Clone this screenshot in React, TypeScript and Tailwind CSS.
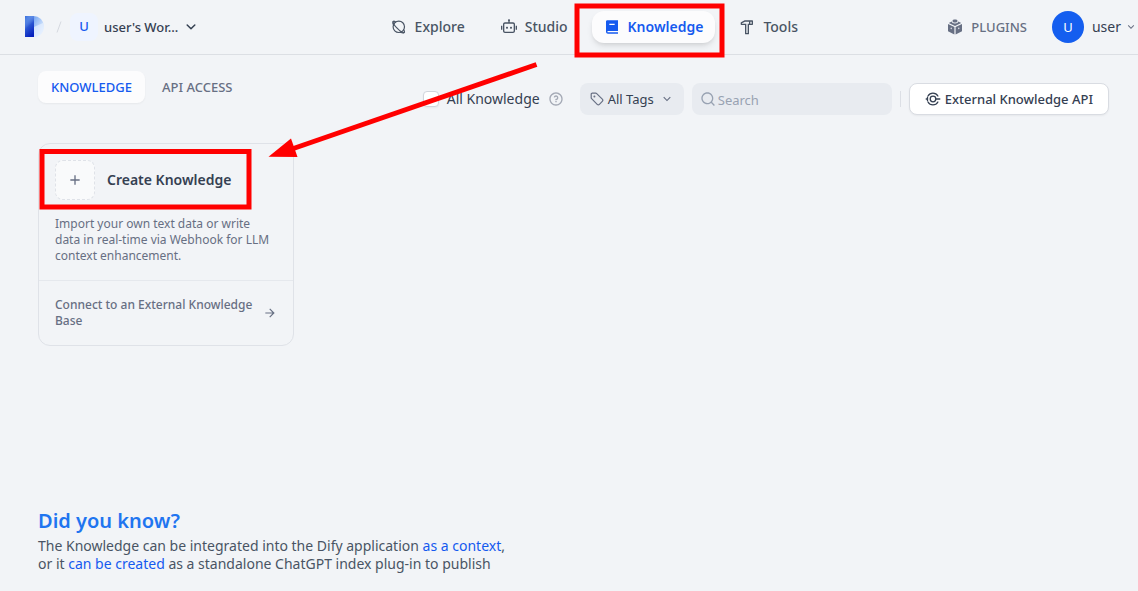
import React from 'react'
import {
  RiAddLine,
  RiArrowDownSLine,
  RiArrowRightLine,
  RiBook2Fill,
  RiHammerLine,
  RiQuestionLine,
  RiRobot2Line,
  RiSearchLine,
} from 'react-icons/ri'

function Logo() {
  return (
    <svg width="19" height="22" viewBox="0 0 19 22" aria-label="Dify" role="img">
      <defs>
        <linearGradient id="logoBowl" x1="0" y1="0" x2="1" y2="0.7">
          <stop offset="0" stopColor="#3a6fdc" />
          <stop offset="0.45" stopColor="#8db6f5" />
          <stop offset="1" stopColor="#edf5ff" />
        </linearGradient>
        <linearGradient id="logoStem" x1="0.2" y1="0" x2="0.6" y2="1">
          <stop offset="0" stopColor="#5c8fe8" stopOpacity="0" />
          <stop offset="0.5" stopColor="#2a55d2" />
          <stop offset="1" stopColor="#0620bd" />
        </linearGradient>
      </defs>
      <path d="M0 0h8.5a10.3 10.3 0 0 1 0 21H0Z" fill="url(#logoBowl)" />
      <path d="M0 0h9v21H0Z" fill="url(#logoStem)" />
      <path d="M9 11l9-4a10 10 0 0 1-9 14Z" fill="#e4efff" opacity="0.75" />
    </svg>
  )
}

function PlanetIcon() {
  return (
    <svg width="16" height="16" viewBox="0 0 16 16" fill="none" stroke="currentColor" strokeWidth="1.200" strokeLinecap="round" strokeLinejoin="round">
      <circle cx="7.800" cy="7.800" r="5.700" />
      <path d="M4.600 2.900C3.600 2.200 2.700 1.900 2.300 2.300c-.8.800.9 3.900 3.800 6.900 3 3 6.300 5 7.200 4.200.4-.4.100-1.300-.6-2.500" />
      <path d="M2.100 2.600c-.3.900-.1 2.400.5 3.700M13 13.700c-.9.300-2.200.1-3.500-.4" />
    </svg>
  )
}

function PluginIcon() {
  return (
    <svg width="16" height="16" viewBox="0 0 16 16">
      <g fill="currentColor">
        <path d="M5.600 1.600C5.600 1 6.600.6 8 .6s2.400.4 2.400 1v.8c0 .5-1 1-2.400 1s-2.400-.5-2.400-1Z" />
        <path d="M4.700 2.500c.1 1.200 1.500 1.900 3.300 1.900s3.200-.7 3.300-1.900l2.900 1.400L8 6.900 1.800 3.900Z" />
        <path d="M1 4.900 7.400 8v7.400L1 12.300ZM15 4.900 8.600 8v7.400l6.400-3.100Z" />
      </g>
      <g fill="#f2f4f7">
        <ellipse cx="4.200" cy="9.400" rx=".6" ry=".8" />
        <ellipse cx="11.800" cy="9.400" rx=".6" ry=".8" />
      </g>
    </svg>
  )
}

function TagIcon() {
  return (
    <svg width="14" height="14" viewBox="0 0 14 14" fill="none" stroke="currentColor" strokeWidth="1.2" strokeLinejoin="round" strokeLinecap="round">
      <path d="M1.200 2.300v3.400c0 .4.100.7.400 1l5.600 5.600c.7.700 1.500.7 2.200 0l2.900-2.900c.7-.7.7-1.500 0-2.200L6.700 1.600c-.3-.3-.6-.4-1-.4H2.300c-.7 0-1.100.4-1.100 1.100Z" />
      <circle cx="4.400" cy="4.400" r=".4" fill="currentColor" />
    </svg>
  )
}

function ApiIcon() {
  return (
    <svg width="16" height="16" viewBox="0 0 16 16" fill="none" stroke="currentColor" strokeWidth="1.300" strokeLinecap="round">
      <path d="M12.900 5A5.700 5.700 0 0 0 3 5M3 11a5.700 5.700 0 0 0 9.900 0" />
      <circle cx="8" cy="8" r="2.800" />
      <path d="M10.800 8H14.800M1.200 8h1.200M2.500 6.200v3.600" />
    </svg>
  )
}

function ChevronIcon() {
  return (
    <svg width="10" height="6" viewBox="0 0 10 6" fill="none" stroke="currentColor" strokeWidth="1.500" strokeLinecap="round" strokeLinejoin="round">
      <path d="m1.200 1 3.800 3.800L8.800 1" />
    </svg>
  )
}

const navItems = [
  { label: 'Explore', icon: <PlanetIcon /> },
  { label: 'Studio', icon: <RiRobot2Line size={16} /> },
  { label: 'Knowledge', icon: <RiBook2Fill size={16} />, active: true },
  { label: 'Tools', icon: <RiHammerLine size={16} /> },
]

function Header() {
  return (
    <header className="flex h-[55px] items-center border-b border-[#dcdfe4]">
      <div className="flex min-w-0 flex-1 items-center pl-[25px]">
        <Logo />
        <svg className="ml-3 text-[#d5d8df]" width="6" height="12" viewBox="0 0 6 12" stroke="currentColor">
          <path d="M5 .5 1 11.500" />
        </svg>
        <button type="button" className="ml-2 flex items-center font-medium text-[#354052]">
          <span className="flex size-7 items-center justify-center rounded-lg bg-[#eff4ff] text-[13px] text-[#155aef]">U</span>
          <span className="ml-1.5 text-[13px] leading-5">user's Wor…</span>
          <span className="ml-2"><ChevronIcon /></span>
        </button>
      </div>
      <nav className="flex items-center gap-3">
        {navItems.map(({ label, icon, active }) => (
          <a
            key={label}
            href="#"
            className={
              active
                ? 'flex h-8 items-center gap-2 rounded-xl bg-[#fcfcfd] px-3 text-sm font-semibold text-[#155aef] shadow-md'
                : 'flex h-8 items-center gap-2 rounded-xl px-3 text-sm font-medium text-[#495464]'
            }
          >
            {icon}
            {label}
          </a>
        ))}
      </nav>
      <div className="flex w-[328px] items-center justify-end pr-px">
        <a href="#" className="flex items-center gap-2 text-[13px] leading-5 font-medium text-[#676f83]">
          <PluginIcon />
          PLUGINS
        </a>
        <button type="button" className="ml-[25px] flex items-center text-sm text-[#354052]">
          <span className="flex size-8 items-center justify-center rounded-full bg-[#155eef] text-[13px] text-white">U</span>
          <span className="ml-2">user</span>
          <RiArrowDownSLine size={12} className="ml-1 text-[#676f83]" />
        </button>
      </div>
    </header>
  )
}

function Toolbar() {
  return (
    <div className="flex items-start justify-between pt-4 pr-[29px] pl-[38px]">
      <div className="flex items-center gap-1 text-[13px] leading-5 font-medium">
        <button type="button" className="h-8 rounded-lg bg-[#fcfcfd] px-[13px] text-[#155aef] shadow-xs">KNOWLEDGE</button>
        <button type="button" className="h-8 px-[13px] text-[#676f83]">API ACCESS</button>
      </div>
      <div className="flex items-center pt-3">
        <label className="flex items-center gap-2 text-sm text-[#354052]">
          <input type="checkbox" className="size-4 appearance-none rounded-sm border border-[#d0d5dc] bg-white shadow-xs" />
          All Knowledge
        </label>
        <RiQuestionLine size={16} className="ml-2 text-[#a4a9b5]" />
        <button type="button" className="ml-4 flex h-8 items-center rounded-lg bg-[#e8ebf0] px-2.5 text-[13px] leading-5 text-[#354052]">
          <span className="text-[#676f83]"><TagIcon /></span>
          <span className="ml-1">All Tags</span>
          <RiArrowDownSLine size={14} className="ml-1.5 text-[#676f83]" />
        </button>
        <label className="ml-2 flex h-8 w-[200px] items-center gap-0.5 rounded-lg bg-[#e8ebf0] px-2 text-[#98a2b2]">
          <RiSearchLine size={16} className="shrink-0" />
          <input type="text" aria-label="Search" placeholder="Search" className="h-8 w-full min-w-0 bg-transparent pt-0.5 text-[13px] leading-5 outline-none placeholder:text-[#98a2b2]" />
        </label>
        <span className="mx-2 h-4 w-px bg-[#dcdfe5]" />
        <button type="button" className="flex h-8 items-center gap-1 rounded-lg border border-[#d9dce2] bg-white px-[15px] text-[13px] leading-5 font-medium text-[#354052] shadow-xs">
          <ApiIcon />
          External Knowledge API
        </button>
      </div>
    </div>
  )
}

function CreateCard() {
  return (
    <section className="mt-7 ml-[38px] w-64 rounded-xl border border-[#dfe2e8] text-xs leading-4 text-[#676f83]">
      <a href="#" className="flex items-center gap-3 px-4 pt-4">
        <span className="flex size-10 items-center justify-center rounded-lg border border-dashed border-[#dfe2e8] bg-[#f9fafb]">
          <RiAddLine size={16} />
        </span>
        <span className="text-sm font-semibold text-[#354052]">Create Knowledge</span>
      </a>
      <p className="p-4">Import your own text data or write data in real-time via Webhook for LLM context enhancement.</p>
      <a href="#" className="flex items-center gap-2 border-t border-[#e5e8ed] p-4 font-medium">
        <span className="flex-1">Connect to an External Knowledge Base</span>
        <RiArrowRightLine size={14} />
      </a>
    </section>
  )
}

function Annotations() {
  return (
    <svg className="pointer-events-none absolute top-0 left-0" width="740" height="220" viewBox="0 0 740 220" aria-hidden="true">
      <g fill="none" stroke="#ff0000" strokeWidth="5">
        <rect x="577" y="6" width="145" height="49" />
        <rect x="42" y="151.500" width="207" height="55.500" />
        <path d="m536.500 64.500-246 85" />
      </g>
      <path d="m268.500 156.800 22.500-18.300 6.500 18.500Z" fill="#ff0000" />
    </svg>
  )
}

export default function App() {
  return (
    <div className="relative flex min-h-screen flex-col overflow-hidden bg-[#f2f4f7] font-['Noto_Sans',sans-serif]">
      <Header />
      <main className="flex flex-1 flex-col">
        <Toolbar />
        <CreateCard />
        <footer className="mt-auto px-[38px] pb-[18px]">
          <h3 className="text-xl leading-7 font-semibold text-[#1f75f0]">Did you know?</h3>
          <p className="mt-0.5 text-sm leading-[18px] text-[#495464]">
            The Knowledge can be integrated into the Dify application <a href="#" className="text-[#155aef]">as a context</a>,
            <br />
            or it <a href="#" className="text-[#155aef]">can be created</a> as a standalone ChatGPT index plug-in to publish
          </p>
        </footer>
      </main>
      <Annotations />
    </div>
  )
}
